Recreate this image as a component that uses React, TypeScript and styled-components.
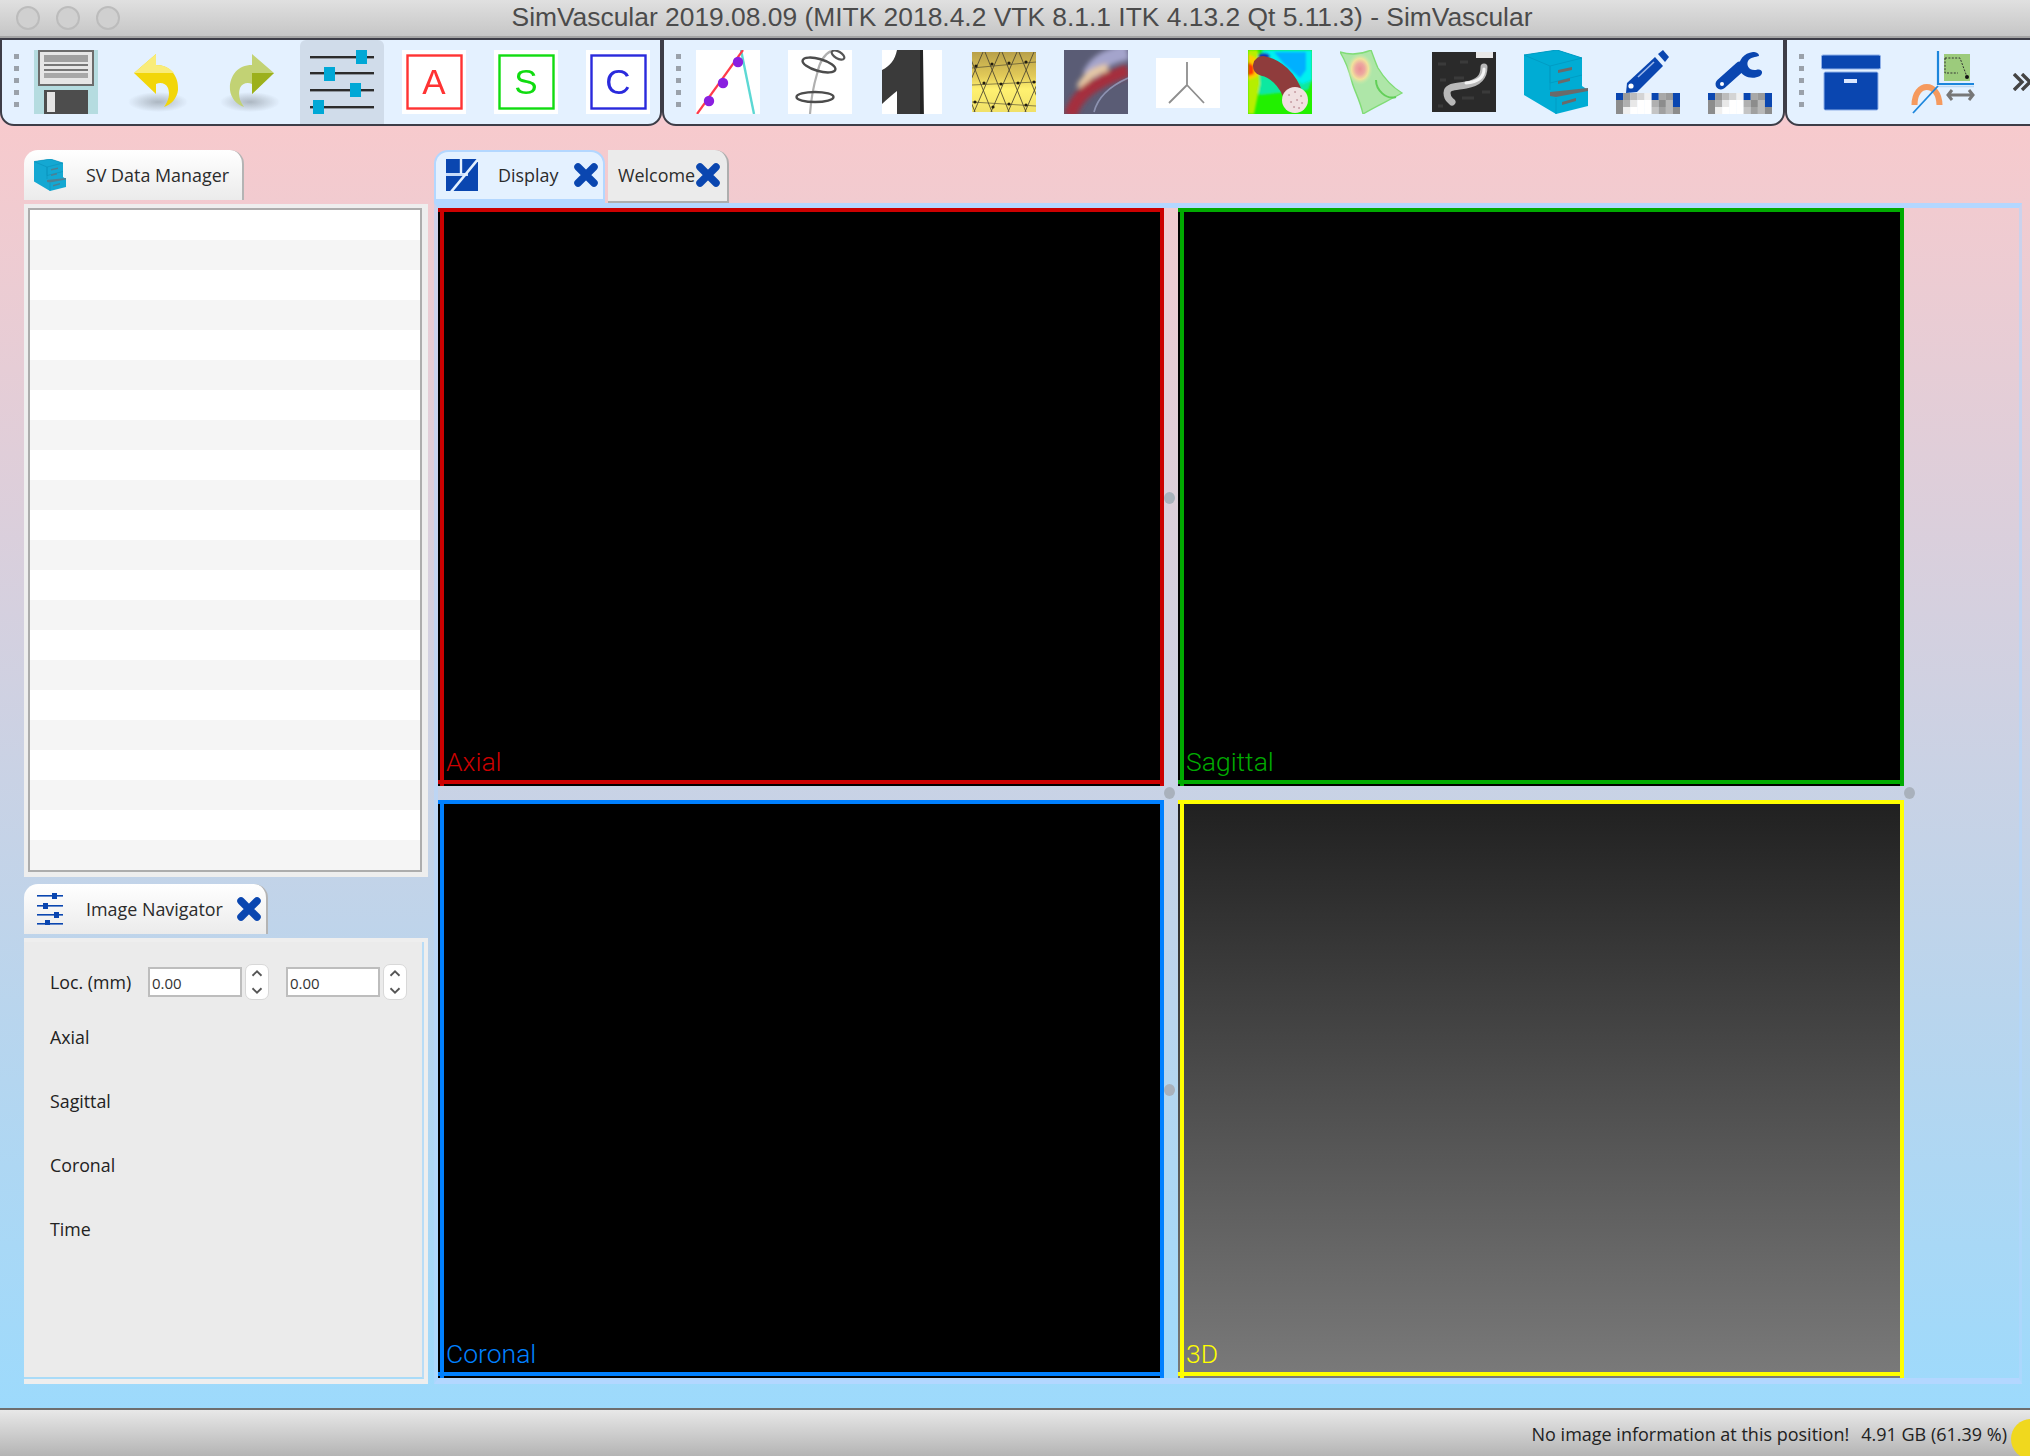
import React from "react";
import styled, { createGlobalStyle } from "styled-components";

const Global = createGlobalStyle`
  html, body { margin: 0; padding: 0; background: #f6cbd0; overflow: hidden; }
  * { box-sizing: border-box; }
`;

const UI_FONT = `"Open Sans", "Noto Sans", "Liberation Sans", sans-serif`;
const BLUE = "#0a46b0";

const Page = styled.div`
  width: 2030px;
  height: 1456px;
  display: flex;
  flex-direction: column;
  overflow: hidden;
  font-family: ${UI_FONT};
`;

const TitleBar = styled.header`
  height: 38px;
  flex: none;
  display: grid;
  grid-template-columns: 1fr auto 1fr;
  align-items: center;
  background: linear-gradient(#e0e0e0, #c6c6c6);
  border-bottom: 2px solid #a4a4a4;
`;
const Lights = styled.div`
  display: flex;
  gap: 16px;
  padding-left: 16px;
`;
const Light = styled.span`
  width: 24px;
  height: 24px;
  border-radius: 50%;
  background: #d0d0d0;
  border: 2px solid #bcbcbc;
`;
const Title = styled.h1`
  margin: 0 0 2px;
  padding-left: 14px;
  font: 400 26.4px "Liberation Sans", sans-serif;
  color: #4b4b4b;
  white-space: nowrap;
`;

const Toolbar = styled.div`
  height: 88px;
  flex: none;
  display: flex;
  background: #f6cbd0;
  overflow: hidden;
`;
const ToolSection = styled.div<{ $w: number }>`
  width: ${(p) => p.$w}px;
  flex: none;
  display: flex;
  align-items: flex-end;
  background: #e4f1ff;
  border: 2px solid #3d3d47;
  border-radius: 0 0 14px 14px;
  padding-left: 12px;
`;
const Handle = styled.div`
  align-self: flex-start;
  margin: 14px 5px 0 0;
  display: flex;
  flex-direction: column;
  gap: 7px;
  & > i {
    display: block;
    width: 5px;
    height: 5px;
    background: #9aa1aa;
  }
`;
const ToolButton = styled.div<{ $active?: boolean }>`
  width: 84px;
  height: 84px;
  margin-right: 8px;
  flex: none;
  display: flex;
  align-items: center;
  justify-content: center;
  border-radius: 6px 6px 0 0;
  background: ${(p) => (p.$active ? "#d0dcea" : "transparent")};
`;
const Icon = styled.svg`
  width: 64px;
  height: 64px;
  display: block;
  filter: blur(0.45px);
`;
const More = styled.svg`
  width: 20px;
  height: 18px;
  align-self: flex-start;
  margin: 33px 0 0 20px;
  flex: none;
  filter: blur(0.4px);
`;

const Main = styled.main`
  flex: 1;
  display: flex;
  gap: 6px;
  padding: 24px 8px 24px 24px;
  background: linear-gradient(#f7cacd, #9ddafc);
`;
const Dock = styled.aside`
  width: 404px;
  flex: none;
  display: flex;
  flex-direction: column;
`;
const Center = styled.section`
  flex: 1;
  display: flex;
  flex-direction: column;
`;
const DockTab = styled.div<{ $w: number; $top?: number }>`
  width: ${(p) => p.$w}px;
  height: 50px;
  flex: none;
  margin-top: ${(p) => p.$top ?? 0}px;
  display: flex;
  align-items: center;
  padding: 0 4px 0 10px;
  border-radius: 14px 14px 0 0;
  border-right: 2px solid #b4b4b4;
  background: linear-gradient(#fff, #ebebeb);
  font-size: 17.9px;
  color: #2b2b2b;
  white-space: nowrap;
`;
const TabIcon = styled.svg<{ $lead?: number; $trail?: number }>`
  width: 32px;
  height: 32px;
  flex: none;
  margin-left: ${(p) => p.$lead ?? 0}px;
  margin-right: ${(p) => p.$trail ?? 20}px;
`;
const CloseIcon = styled.svg`
  width: 26px;
  height: 26px;
  flex: none;
`;
const ListFrame = styled.div`
  height: 673px;
  margin-top: 4px;
  background: #eeeeee;
  padding: 4px 6px 5px 4px;
`;
const List = styled.div`
  height: 100%;
  overflow: hidden;
  border: 2px solid #adadad;
`;
const ListRow = styled.div`
  height: 30px;
  background: #fff;
  &:nth-child(even) {
    background: #f5f5f5;
  }
`;
const NavOuter = styled.div`
  flex: 1;
  margin-top: 4px;
  background: #eeeeee;
  padding: 4px 4px 5px 0;
`;
const NavInner = styled.div`
  height: 100%;
  background: #ebebeb;
  border-right: 2px solid #b8dcf6;
  border-bottom: 2px solid #a9dbf8;
  padding: 22px 0 0 26px;
`;
const LocRow = styled.div`
  display: flex;
  align-items: center;
  height: 36px;
  margin-bottom: 25px;
`;
const NavLabel = styled.div`
  font-size: 17.8px;
  line-height: 24px;
  height: 24px;
  margin-bottom: 40px;
  color: #222;
`;
const LocLabel = styled(NavLabel)`
  width: 98px;
  margin: 0;
  flex: none;
`;
const Field = styled.div`
  width: 94px;
  height: 30px;
  flex: none;
  background: #fff;
  border: 2px solid #bdbdbd;
  padding-left: 2px;
  font-size: 15px;
  line-height: 28px;
  color: #333;
`;
const Spin = styled.div`
  width: 24px;
  height: 36px;
  flex: none;
  margin: 0 17px 0 3px;
  background: #fff;
  border: 1px solid #d8d8d8;
  border-radius: 7px;
  display: flex;
  flex-direction: column;
  align-items: center;
  justify-content: space-around;
  & > svg {
    width: 14px;
    height: 9px;
  }
`;

const CenterTabs = styled.div`
  height: 53px;
  flex: none;
  display: flex;
  align-items: flex-start;
  gap: 3px;
`;
const DisplayTab = styled.div`
  width: 171px;
  height: 53px;
  display: flex;
  align-items: center;
  padding: 0 4px 2px 10px;
  border: 2px solid #b3d7ff;
  border-bottom-width: 4px;
  border-radius: 14px 14px 0 0;
  background: #e4f1ff;
  font-size: 17.9px;
  color: #2b2b2b;
`;
const TabText = styled.span`
  flex: 1;
  white-space: nowrap;
`;
const WelcomeTab = styled.div`
  width: 121px;
  height: 53px;
  display: flex;
  align-items: center;
  padding: 0 6px 2px 10px;
  border-right: 2px solid #aeaeae;
  border-bottom: 2px solid #aeaeae;
  border-radius: 0 14px 0 0;
  background: #ebebeb;
  font-size: 17.9px;
  color: #2b2b2b;
`;
const Frame = styled.div`
  position: relative;
  flex: 1;
  display: grid;
  grid-template-columns: 726px 726px;
  grid-template-rows: 578px 578px;
  gap: 14px;
  border-top: 5px solid #b3d7ff;
  border-left: 4px solid rgba(179, 215, 255, 0.55);
  border-right: 3px solid rgba(179, 215, 255, 0.6);
  border-bottom: 6px solid #b3d7ff;
`;
const Pane = styled.div<{ $color: string; $bg?: string }>`
  position: relative;
  display: flex;
  align-items: flex-end;
  padding: 0 0 9px 8px;
  background: ${(p) => p.$bg ?? "#000"};
  color: ${(p) => p.$color};
  font: 300 26.5px Roboto, "Liberation Sans", sans-serif;
  &::before {
    content: "";
    position: absolute;
    inset: 0 0 0 2px;
    border-left: 4px solid ${(p) => p.$color};
    border-right: 4px solid ${(p) => p.$color};
  }
  &::after {
    content: "";
    position: absolute;
    inset: 0 0 2px 0;
    border-top: 4px solid ${(p) => p.$color};
    border-bottom: 4px solid ${(p) => p.$color};
  }
`;
const Grip = styled.span<{ $x: number; $y: number }>`
  position: absolute;
  left: ${(p) => p.$x}px;
  top: ${(p) => p.$y}px;
  width: 11px;
  height: 12px;
  border-radius: 50%;
  background: #a9b1bc;
`;

const StatusBar = styled.footer`
  height: 48px;
  flex: none;
  display: flex;
  justify-content: flex-end;
  align-items: center;
  padding-top: 2px;
  border-top: 2px solid #6e6e6e;
  background: linear-gradient(#e8e8e8, #b4b4b4);
  overflow: hidden;
  font-size: 18px;
  color: #222;
  white-space: nowrap;
`;
const StatusMsg = styled.span`
  margin-right: 12px;
`;
const Memory = styled.span`
  margin-right: 4px;
`;
const MemDot = styled.span`
  width: 40px;
  height: 40px;
  flex: none;
  margin-right: -21px;
  align-self: flex-start;
  margin-top: 7px;
  border-radius: 50%;
  background: #f0d81e;
`;

const Save = () => (
  <Icon viewBox="0 0 64 64">
    <rect width="64" height="64" fill="#b5dce0" />
    <rect x="5" y="1" width="54" height="34" fill="#e6e6e6" stroke="#6c6c6c" strokeWidth="2" />
    <rect x="10" y="5" width="44" height="7" fill="#a0a0a0" />
    <rect x="10" y="14" width="44" height="2" fill="#777" />
    <rect x="10" y="19" width="44" height="2" fill="#777" />
    <rect x="10" y="23" width="44" height="5" fill="#a8a8a8" />
    <rect x="10" y="40" width="44" height="24" fill="#4d4d4d" />
    <rect x="13" y="42" width="8" height="20" fill="#e4e4e4" />
  </Icon>
);

const Arrow = ({ a, b, part, id, mirror }: { a: string; b: string; part: string; id: string; mirror?: boolean }) => (
  <Icon viewBox="0 0 64 64">
    <defs>
      <radialGradient id={id}>
        <stop offset="0" stopColor="#9aa3ad" stopOpacity="0.75" />
        <stop offset="1" stopColor="#9aa3ad" stopOpacity="0" />
      </radialGradient>
    </defs>
    <g transform={mirror ? "translate(64 0) scale(-1 1)" : undefined}>
      <ellipse cx="32" cy="52" rx="30" ry="10" fill={`url(#${id})`} />
      <path d="M8 23 L30 4 L30 15 C45 15 53 27 52 40 C51 48 46 54 38 57 C43 50 44 44 42 38 C40 33 34 32 30 34 L30 44 Z" fill={a} />
      <path d={part} fill={b} />
    </g>
  </Icon>
);

const Sliders = () => (
  <Icon viewBox="0 0 64 64">
    {[7, 23, 40, 57].map((y) => (
      <rect key={y} x="0" y={y - 1} width="64" height="2.4" fill="#2c2c2c" />
    ))}
    <rect x="46" y="0" width="11" height="14" fill="#00a8d6" />
    <rect x="14" y="17" width="11" height="14" fill="#00a8d6" />
    <rect x="40" y="33" width="11" height="14" fill="#00a8d6" />
    <rect x="3" y="50" width="11" height="14" fill="#00a8d6" />
  </Icon>
);

const Letter = ({ ch, color }: { ch: string; color: string }) => (
  <Icon viewBox="0 0 64 64">
    <rect width="64" height="64" fill="#fff" />
    <rect x="5.5" y="5.5" width="54" height="53" fill="none" stroke={color} strokeWidth="2.4" />
    <text x="32" y="44" textAnchor="middle" fontFamily="Liberation Sans" fontSize="35" fill={color}>
      {ch}
    </text>
  </Icon>
);

const Curve = () => (
  <Icon viewBox="0 0 64 64">
    <rect width="64" height="64" fill="#fff" />
    <path d="M45 0 L58 64" stroke="#5cd8d4" strokeWidth="2.4" />
    <path d="M1 64 L47 0" stroke="#ff3b4a" strokeWidth="2.2" />
    <circle cx="13" cy="51" r="5.2" fill="#8a1fe0" />
    <circle cx="27" cy="33" r="5.2" fill="#8a1fe0" />
    <circle cx="42" cy="12" r="5.2" fill="#8a1fe0" />
  </Icon>
);

const Contour = () => (
  <Icon viewBox="0 0 64 64">
    <rect width="64" height="64" fill="#fff" />
    <path d="M22 64 C23 50 26 34 29 24 C31 14 35 5 43 1" fill="none" stroke="#b0b0b0" strokeWidth="2.2" />
    <ellipse cx="31" cy="15" rx="17" ry="6" transform="rotate(16 31 15)" fill="none" stroke="#4c4c4c" strokeWidth="2.4" />
    <ellipse cx="27" cy="47" rx="18.5" ry="5" fill="none" stroke="#4c4c4c" strokeWidth="2.4" />
    <ellipse cx="50" cy="5" rx="7" ry="3.4" transform="rotate(30 50 5)" fill="none" stroke="#555" strokeWidth="2.2" />
  </Icon>
);

const WideIcon = styled(Icon)<{ $w?: number; $h?: number }>`
  width: ${(p) => p.$w ?? 64}px;
  height: ${(p) => p.$h ?? 64}px;
`;

const Model = () => (
  <WideIcon $w={60} viewBox="0 0 60 64">
    <rect width="60" height="64" fill="#fff" />
    <path d="M0 20 C8 16 13 10 15 0 L41 0 L42 64 L15 64 L15 41 C10 45 5 49 0 54 Z" fill="#3a3a3a" />
    <rect x="38" width="3" height="64" fill="#242424" />
  </WideIcon>
);

const Mesh = () => {
  const lines: string[] = [];
  for (let i = -2; i < 6; i++) {
    lines.push(`M${i * 17 - 4} 0 L${i * 17 + 20} 60`);
    lines.push(`M${i * 17 + 28} 0 L${i * 17 + 2} 60`);
  }
  return (
    <WideIcon $h={60} viewBox="0 0 64 60">
      <defs>
        <linearGradient id="meshFill" x1="0" y1="0" x2="0" y2="1">
          <stop offset="0" stopColor="#b8a04a" />
          <stop offset="0.4" stopColor="#e2ca58" />
          <stop offset="0.62" stopColor="#fff170" />
          <stop offset="1" stopColor="#f0e068" />
        </linearGradient>
      </defs>
      <rect width="64" height="60" fill="url(#meshFill)" />
      <path d={lines.join(" ")} stroke="#4a4430" strokeWidth="1" fill="none" opacity="0.85" />
      <path d="M0 16 L64 10 M0 33 L64 30 M0 50 L64 54" stroke="#4a4430" strokeWidth="0.9" opacity="0.7" />
      {[[4,14],[20,12],[37,11],[54,10],[12,31],[29,32],[46,31],[62,30],[3,50],[21,55],[37,52],[54,53]].map(([x, y]) => (
        <circle key={`${x}-${y}`} cx={x} cy={y} r="1.6" fill="#201c10" />
      ))}
    </WideIcon>
  );
};

const Sim = () => (
  <Icon viewBox="0 0 64 64">
    <defs>
      <filter id="simBlur" x="-30%" y="-30%" width="160%" height="160%">
        <feGaussianBlur stdDeviation="2.6" />
      </filter>
      <clipPath id="simClip">
        <rect width="64" height="64" />
      </clipPath>
    </defs>
    <rect width="64" height="64" fill="#5a5c75" />
    <g clipPath="url(#simClip)">
      <g filter="url(#simBlur)">
        <path d="M26 26 C32 12 44 6 64 2" fill="none" stroke="#a4a4cc" strokeWidth="16" />
        <path d="M16 38 C22 26 30 20 44 18" fill="none" stroke="#e6c8a4" strokeWidth="8" />
        <path d="M6 66 C12 46 26 34 64 20" fill="none" stroke="#a52f3c" strokeWidth="13" />
      </g>
      <path d="M30 62 C34 46 46 36 64 28" fill="none" stroke="#9aa0c0" strokeWidth="1.6" opacity="0.8" />
    </g>
  </Icon>
);

const Tree = () => (
  <Icon viewBox="0 0 64 64">
    <rect y="8" width="64" height="50" fill="#fff" />
    <path d="M31 12 V35 M31 35 L13 53 M31 35 L48 53" stroke="#8e8e8e" strokeWidth="1.8" fill="none" />
  </Icon>
);

const Results = () => (
  <Icon viewBox="0 0 64 64">
    <defs>
      <filter id="resBlur" x="-20%" y="-20%" width="140%" height="140%">
        <feGaussianBlur stdDeviation="1.3" />
      </filter>
      <clipPath id="resClip">
        <rect width="64" height="64" />
      </clipPath>
    </defs>
    <rect width="64" height="64" fill="#22f000" />
    <g clipPath="url(#resClip)">
      <g filter="url(#resBlur)">
        <path d="M0 30 L12 45 L60 40 L64 30 L64 0 L14 0 Z" fill="#10e8a0" />
        <path d="M14 0 H64 V30 L54 34 L28 14 Z" fill="#00f0f0" />
        <path d="M26 2 H58 V20 L52 28 L36 14 Z" fill="#00b0ff" />
        <path d="M0 0 H10 L12 34 L6 64 L0 64 Z" fill="#b6ef00" />
        <path d="M0 4 L8 8 L10 26 L0 30 Z" fill="#ffcc00" />
        <path d="M0 12 L6 16 L6 24 L0 26 Z" fill="#ff3a00" />
        <ellipse cx="16" cy="6" rx="6" ry="3" fill="#1030c0" />
      </g>
      <path d="M15 16 C26 18 40 28 46 48" fill="none" stroke="#8f3c3c" strokeWidth="20" strokeLinecap="round" />
      <circle cx="47" cy="50" r="13" fill="#f0dfe0" />
      <path d="M41 45 h.1 M47 42 h.1 M53 46 h.1 M43 52 h.1 M49 50 h.1 M54 53 h.1 M46 57 h.1 M51 58 h.1" stroke="#c9a0a6" strokeWidth="2" strokeLinecap="round" />
    </g>
  </Icon>
);

const Surface = () => (
  <Icon viewBox="0 0 64 64">
    <defs>
      <radialGradient id="surfSpot">
        <stop offset="0" stopColor="#ea8f94" />
        <stop offset="0.35" stopColor="#eda8a0" />
        <stop offset="0.65" stopColor="#f1e29c" />
        <stop offset="1" stopColor="#bdeab0" stopOpacity="0" />
      </radialGradient>
    </defs>
    <path d="M0 2 C10 5 22 4 31 0 C34 8 36 14 38 18 C44 28 54 38 62 43 C50 50 36 56 23 64 C20 50 14 40 12 32 C9 20 5 10 0 2 Z" fill="#aee6a8" stroke="#80dc76" strokeWidth="1.4" />
    <ellipse cx="20" cy="19" rx="13" ry="16" fill="url(#surfSpot)" />
    <path d="M36 30 C36 40 46 50 56 47" fill="none" stroke="#62cf58" strokeWidth="2" />
  </Icon>
);

const Vessel = () => (
  <WideIcon $h={60} viewBox="0 0 64 60">
    <rect width="64" height="60" fill="#2a2a2a" />
    <path d="M6 12 h8 M22 26 h10 M8 28 h6 M30 46 h12 M50 40 h8 M6 54 h5 M28 10 h8" stroke="#3a3a3a" strokeWidth="3" />
    <rect x="44" width="17" height="6" fill="#e8e8e8" />
    <path d="M52 15 C52 26 46 31 34 33 C24 35 15 34 15 41 C15 47 18 48 20 50" fill="none" stroke="#b8b8b8" strokeWidth="7" strokeLinecap="round" />
    <path d="M52 17 C52 26 46 30 34 31" fill="none" stroke="#f4f4f4" strokeWidth="3" strokeLinecap="round" />
  </WideIcon>
);

const CabinetShape = ({ body = "#00acd4", top = "#009cc4", handle = "#6a6a6a" }) => (
  <>
    <path d="M0 5 L33 0 L58 8 L58 36 L64 40 L64 56 L32 64 L0 45 Z" fill={body} />
    <path d="M0 5 L33 0 L58 8 L26 16 Z" fill={body} stroke={top} strokeWidth="1" />
    <path d="M26 16 V33 M26 33 L58 25 M26 16 L26 40" stroke={top} strokeWidth="1" fill="none" />
    <path d="M26 42 L64 38 L64 41 L32 47 L26 46 Z" fill={handle} />
    <path d="M34 20 L48 17 V20 L34 23 Z M34 31 L46 28 V31 L34 34 Z M38 52 L52 48 V51 L38 55 Z" fill={handle} />
    <path d="M32 48 V64" stroke={top} strokeWidth="1" />
  </>
);

const Cabinet = () => (
  <Icon viewBox="0 0 64 64">
    <CabinetShape />
  </Icon>
);

const GRID = [
  "#0a46b0 #9a9a9a #bcbcbc #d4d4d4 #f0f0f0 #0a46b0 #a8a8a8 #9a9a9a #0a46b0",
  "#8c8c8c #b0b0b0 #e8e8e8 #ffffff #ffffff #b0b0b0 #8c8c8c #b8b8b8 #0a46b0",
  "#8c8c8c #f0f0f0 #ffffff #ffffff #ffffff #c4c4c4 #a0a0a0 #b8b8b8 #8c8c8c",
];
const PixelGrid = () => (
  <>
    {GRID.map((row, r) =>
      row.split(" ").map((c, i) => (
        <rect key={`${r}-${i}`} x={i * 7.12} y={43 + r * 7} width="7.2" height="7.1" fill={c} />
      ))
    )}
  </>
);

const Pencil = () => (
  <Icon viewBox="0 0 64 64">
    <PixelGrid />
    <path d="M11 33 L39 7 L47 16 L21 42 L10 43 Z" fill={BLUE} />
    <path d="M42 4 L47 0 L53 7 L49 12 Z" fill={BLUE} />
    <path d="M22 27 L38 12" stroke="#9db8ea" strokeWidth="1.6" />
    <circle cx="15" cy="36" r="2.6" fill="#fff" />
  </Icon>
);

const Wrench = () => (
  <Icon viewBox="0 0 64 64">
    <PixelGrid />
    <path d="M13 34 L32 17" stroke={BLUE} strokeWidth="11" strokeLinecap="round" />
    <path d="M45 2 C36 3 30 10 31 19 C34 27 44 30 52 26 C56 23 54 18 48 20 C41 21 38 15 40 11 C42 7 48 7 51 6 C51 3 48 2 45 2 Z" fill={BLUE} />
    <circle cx="14" cy="34" r="2" fill="#fff" />
  </Icon>
);

const Archive = () => (
  <Icon viewBox="0 0 64 64">
    <rect x="2.5" y="5" width="59" height="14" rx="1.5" fill={BLUE} stroke="#8fb0e8" strokeWidth="1" />
    <rect x="5" y="22" width="54" height="38" rx="1.5" fill={BLUE} stroke="#8fb0e8" strokeWidth="1" />
    <rect x="25" y="29" width="13" height="4" fill="#dce8ff" />
  </Icon>
);

const Measure = () => (
  <Icon viewBox="0 0 64 64">
    <rect x="33" y="4" width="26" height="27" fill="#9ccb7c" />
    <path d="M34 8 H49 L56 27 M34 8 V23 H47" fill="none" stroke="#333" strokeWidth="1" strokeDasharray="2 1.4" />
    <circle cx="56" cy="27" r="2" fill="#111" />
    <path d="M27 1 V34 H63" fill="none" stroke="#1c86dc" strokeWidth="2.2" />
    <path d="M27 36.5 H63" stroke="#bcd9f4" strokeWidth="1.6" />
    <path d="M3.5 55 C3.5 31 28 31 28.5 55" fill="none" stroke="#f59a5e" strokeWidth="6" />
    <path d="M2 63 L27 36" stroke="#1c86dc" strokeWidth="1.8" />
    <path d="M38 45 H61 M41 40 L37 45 L41 50 M58 40 L62 45 L58 50" fill="none" stroke="#777" strokeWidth="3" />
  </Icon>
);

const Close = () => (
  <CloseIcon viewBox="0 0 26 26">
    <path d="M5 5 L21 21 M21 5 L5 21" stroke={BLUE} strokeWidth="7.5" strokeLinecap="round" />
  </CloseIcon>
);

const DisplayGlyph = () => (
  <TabIcon viewBox="0 0 32 32">
    <rect width="32" height="32" fill={BLUE} />
    <path d="M0 15.5 H22" stroke="#c8dcfa" strokeWidth="3" />
    <path d="M15 0 V15" stroke="#e4f1ff" strokeWidth="2.4" />
    <path d="M33 -1 L5 33" stroke="#e4f1ff" strokeWidth="2.6" />
  </TabIcon>
);

const NavSliders = () => (
  <TabIcon viewBox="0 0 32 32" $lead={1} $trail={19}>
    {[3, 13, 22, 31].map((y) => (
      <rect key={y} x="2" y={y - 1} width="26" height="1.6" fill={BLUE} />
    ))}
    <rect x="17" y="0" width="5" height="6" fill={BLUE} />
    <rect x="8" y="10" width="5" height="6" fill={BLUE} />
    <rect x="19" y="19" width="5" height="6" fill={BLUE} />
    <rect x="10" y="27" width="5" height="5" fill={BLUE} />
  </TabIcon>
);

const CabinetTab = () => (
  <TabIcon viewBox="0 0 64 64">
    <CabinetShape body="#14a8d2" top="#0a8cb4" handle="#4f7f92" />
  </TabIcon>
);

const Chevron = () => (
  <svg viewBox="0 0 12 8" aria-hidden="true">
    <path d="M2 6 L6 2 L10 6" fill="none" stroke="#555" strokeWidth="1.6" />
  </svg>
);
const ChevronDown = () => (
  <svg viewBox="0 0 12 8" aria-hidden="true">
    <path d="M2 2 L6 6 L10 2" fill="none" stroke="#555" strokeWidth="1.6" />
  </svg>
);

const dots = [0, 1, 2, 3, 4];
const Grabber = () => (
  <Handle>
    {dots.map((d) => (
      <i key={d} />
    ))}
  </Handle>
);

const sec1: React.ReactNode[] = [
  <Save />,
  <Arrow id="undoSh" a="#f2d60a" b="#f9ec7a" part="M8 23 L30 4 L30 15 C38 15 44 18 48 23 Z" />,
  <Arrow id="redoSh" a="#c2d274" b="#9cb01c" part="M8 23 L30 23 L30 44 Z" mirror />,
  <Sliders />,
  <Letter ch="A" color="#ff3333" />,
  <Letter ch="S" color="#10dc10" />,
  <Letter ch="C" color="#2a2adc" />,
];
const sec2: React.ReactNode[] = [
  <Curve />,
  <Contour />,
  <Model />,
  <Mesh />,
  <Sim />,
  <Tree />,
  <Results />,
  <Surface />,
  <Vessel />,
  <Cabinet />,
  <Pencil />,
  <Wrench />,
];
const sec3: React.ReactNode[] = [<Archive />, <Measure />];

const rows = Array.from({ length: 23 }, (_, i) => i);

export default function App() {
  return (
    <Page>
      <Global />
      <TitleBar>
        <Lights>
          <Light />
          <Light />
          <Light />
        </Lights>
        <Title>SimVascular 2019.08.09 (MITK 2018.4.2 VTK 8.1.1 ITK 4.13.2 Qt 5.11.3) - SimVascular</Title>
      </TitleBar>
      <Toolbar>
        <ToolSection $w={662}>
          <Grabber />
          {sec1.map((n, i) => (
            <ToolButton key={i} $active={i === 3}>
              {n}
            </ToolButton>
          ))}
        </ToolSection>
        <ToolSection $w={1123}>
          <Grabber />
          {sec2.map((n, i) => (
            <ToolButton key={i}>{n}</ToolButton>
          ))}
        </ToolSection>
        <ToolSection $w={260}>
          <Grabber />
          {sec3.map((n, i) => (
            <ToolButton key={i}>{n}</ToolButton>
          ))}
          <More viewBox="0 0 20 18">
            <path d="M1 1 L9 9 L1 17 M9 1 L17 9 L9 17" fill="none" stroke="#444" strokeWidth="3.4" />
          </More>
        </ToolSection>
      </Toolbar>
      <Main>
        <Dock>
          <DockTab $w={220}>
            <CabinetTab />
            SV Data Manager
          </DockTab>
          <ListFrame>
            <List>
              {rows.map((r) => (
                <ListRow key={r} />
              ))}
            </List>
          </ListFrame>
          <DockTab $w={244} $top={7}>
            <NavSliders />
            <TabText>Image Navigator</TabText>
            <Close />
          </DockTab>
          <NavOuter>
            <NavInner>
              <LocRow>
                <LocLabel>Loc. (mm)</LocLabel>
                <Field>0.00</Field>
                <Spin>
                  <Chevron />
                  <ChevronDown />
                </Spin>
                <Field>0.00</Field>
                <Spin>
                  <Chevron />
                  <ChevronDown />
                </Spin>
              </LocRow>
              <NavLabel>Axial</NavLabel>
              <NavLabel>Sagittal</NavLabel>
              <NavLabel>Coronal</NavLabel>
              <NavLabel>Time</NavLabel>
            </NavInner>
          </NavOuter>
        </Dock>
        <Center>
          <CenterTabs>
            <DisplayTab>
              <DisplayGlyph />
              <TabText>Display</TabText>
              <Close />
            </DisplayTab>
            <WelcomeTab>
              <TabText>Welcome</TabText>
              <Close />
            </WelcomeTab>
          </CenterTabs>
          <Frame>
            <Pane $color="#cc0000">Axial</Pane>
            <Pane $color="#00aa00">Sagittal</Pane>
            <Pane $color="#0080ff">Coronal</Pane>
            <Pane $color="#ffff00" $bg="linear-gradient(#202020, #7a7a7a)">3D</Pane>
            <Grip $x={726} $y={284} />
            <Grip $x={726} $y={579} />
            <Grip $x={1466} $y={579} />
            <Grip $x={726} $y={876} />
          </Frame>
        </Center>
      </Main>
      <StatusBar>
        <StatusMsg>No image information at this position!</StatusMsg>
        <Memory>4.91 GB (61.39 %)</Memory>
        <MemDot />
      </StatusBar>
    </Page>
  );
}
